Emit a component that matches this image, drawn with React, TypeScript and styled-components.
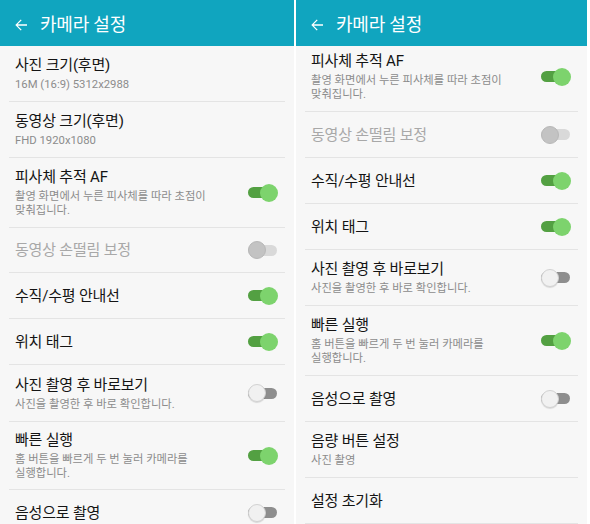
import React from "react";
import styled, { createGlobalStyle } from "styled-components";

const Global = createGlobalStyle`
  html, body { margin: 0; padding: 0; background: #ffffff; }
  body { font-family: Roboto, "Noto Sans CJK KR", "Noto Sans", sans-serif; }
`;

const Screen = styled.div`
  display: flex;
  gap: 2px;
  width: 590px;
  height: 524px;
  background: #ffffff;
  overflow: hidden;
`;

const Panel = styled.div<{ $w: number }>`
  width: ${(p) => p.$w}px;
  height: 524px;
  display: flex;
  flex-direction: column;
  background: #f7f7f7;
  overflow: hidden;
  flex: none;
`;

const Header = styled.div`
  height: 46px;
  flex: none;
  box-sizing: border-box;
  padding: 3px 0 0 12px;
  display: flex;
  align-items: center;
  gap: 10px;
  background: #10a5bf;
  color: #ffffff;
`;

const HeaderTitle = styled.div`
  font-size: 18px;
  line-height: 22px;
  letter-spacing: -0.2px;
  color: #ffffff;
`;

const Viewport = styled.div`
  flex: 1;
  overflow: hidden;
`;

const List = styled.div<{ $scroll: number }>`
  margin-top: -${(p) => p.$scroll}px;
  display: flex;
  flex-direction: column;
`;

const Row = styled.div<{ $h: number }>`
  height: ${(p) => p.$h}px;
  flex: none;
  margin: 0 9px 0 9px;
  padding: 0 7px 0 6px;
  border-bottom: 1px solid #e4e4e4;
  box-sizing: border-box;
  display: flex;
  align-items: center;
  justify-content: space-between;
`;

const TextBlock = styled.div`
  display: flex;
  flex-direction: column;
  gap: 3px;
`;

const Title = styled.div<{ $disabled?: boolean }>`
  font-size: 15px;
  line-height: 20px;
  letter-spacing: -0.2px;
  color: ${(p) => (p.$disabled ? "#a8a8a8" : "#141414")};
`;

const Sub = styled.div`
  font-size: 11.3px;
  line-height: 14px;
  color: #8c8c8c;
`;

const SwitchBox = styled.div`
  position: relative;
  width: 30px;
  height: 18px;
  flex: none;
`;

const Track = styled.div<{ $state: "on" | "off" | "disabled" }>`
  position: absolute;
  left: 0;
  right: 1px;
  top: 3.5px;
  height: 11px;
  border-radius: 6px;
  background: ${(p) =>
    p.$state === "on" ? "#53a042" : p.$state === "off" ? "#8e8e8e" : "#d9d9d9"};
`;

const Thumb = styled.div<{ $state: "on" | "off" | "disabled" }>`
  position: absolute;
  top: 0;
  ${(p) => (p.$state === "on" ? "right: 0;" : "left: 0;")}
  width: 18px;
  height: 18px;
  border-radius: 50%;
  box-sizing: border-box;
  background: ${(p) =>
    p.$state === "on" ? "#7dd36d" : p.$state === "off" ? "#f1f1f1" : "#c3c3c3"};
  ${(p) =>
    p.$state === "off"
      ? "border: 1px solid #d2d2d2; box-shadow: 0 1px 1px rgba(0,0,0,0.12);"
      : p.$state === "disabled"
      ? "border: 1px solid #b8b8b8;"
      : ""}
`;

type SwitchState = "on" | "off" | "disabled";

type Item = {
  title: string;
  sub?: string[];
  sw?: SwitchState;
  h: number;
};

const Switch = ({ state }: { state: SwitchState }) => (
  <SwitchBox>
    <Track $state={state} />
    <Thumb $state={state} />
  </SwitchBox>
);

const BackArrow = () => (
  <svg width="18" height="18" viewBox="0 0 24 24" fill="#ffffff">
    <path d="M20 11.1H7.6l5.3-5.3-1.2-1.2L4.4 12l7.3 7.4 1.2-1.2-5.3-5.3H20v-1.8z" />
  </svg>
);

const leftItems: Item[] = [
  { title: "사진 크기(후면)", sub: ["16M (16:9) 5312x2988"], h: 56 },
  { title: "동영상 크기(후면)", sub: ["FHD 1920x1080"], h: 56 },
  {
    title: "피사체 추적 AF",
    sub: ["촬영 화면에서 누른 피사체를 따라 초점이", "맞춰집니다."],
    sw: "on",
    h: 70,
  },
  { title: "동영상 손떨림 보정", sw: "disabled", h: 45 },
  { title: "수직/수평 안내선", sw: "on", h: 46 },
  { title: "위치 태그", sw: "on", h: 46 },
  {
    title: "사진 촬영 후 바로보기",
    sub: ["사진을 촬영한 후 바로 확인합니다."],
    sw: "off",
    h: 57,
  },
  {
    title: "빠른 실행",
    sub: ["홈 버튼을 빠르게 두 번 눌러 카메라를", "실행합니다."],
    sw: "on",
    h: 68,
  },
  { title: "음성으로 촬영", sw: "off", h: 46 },
];

const rightItems: Item[] = [
  {
    title: "피사체 추적 AF",
    sub: ["촬영 화면에서 누른 피사체를 따라 초점이", "맞춰집니다."],
    sw: "on",
    h: 70,
  },
  { title: "동영상 손떨림 보정", sw: "disabled", h: 46 },
  { title: "수직/수평 안내선", sw: "on", h: 46 },
  { title: "위치 태그", sw: "on", h: 46 },
  {
    title: "사진 촬영 후 바로보기",
    sub: ["사진을 촬영한 후 바로 확인합니다."],
    sw: "off",
    h: 56,
  },
  {
    title: "빠른 실행",
    sub: ["홈 버튼을 빠르게 두 번 눌러 카메라를", "실행합니다."],
    sw: "on",
    h: 70,
  },
  { title: "음성으로 촬영", sw: "off", h: 46 },
  { title: "음량 버튼 설정", sub: ["사진 촬영"], h: 56 },
  { title: "설정 초기화", h: 46 },
];

const SettingsPanel = ({
  width,
  items,
  scroll,
}: {
  width: number;
  items: Item[];
  scroll: number;
}) => (
  <Panel $w={width}>
    <Header>
      <BackArrow />
      <HeaderTitle>카메라 설정</HeaderTitle>
    </Header>
    <Viewport>
      <List $scroll={scroll}>
        {items.map((it, i) => (
          <Row key={i} $h={it.h}>
            <TextBlock>
              <Title $disabled={it.sw === "disabled"}>{it.title}</Title>
              {it.sub && (
                <div>
                  {it.sub.map((s, j) => (
                    <Sub key={j}>{s}</Sub>
                  ))}
                </div>
              )}
            </TextBlock>
            {it.sw && <Switch state={it.sw} />}
          </Row>
        ))}
      </List>
    </Viewport>
  </Panel>
);

export default function App() {
  return (
    <>
      <Global />
      <Screen>
        <SettingsPanel width={294} items={leftItems} scroll={0} />
        <SettingsPanel width={291} items={rightItems} scroll={4} />
      </Screen>
    </>
  );
}
